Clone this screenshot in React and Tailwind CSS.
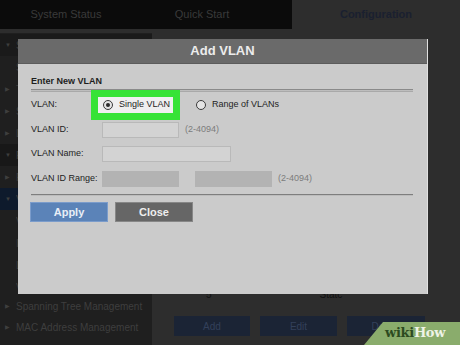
import React from "react";

const sideRows = [
  { arrow: "▼", text: "System", tone: "bg-[#1a1a1a]" },
  { arrow: "", text: "System Info", tone: "" },
  { arrow: "▶", text: "Time", tone: "" },
  { arrow: "▶", text: "SNMP", tone: "" },
  { arrow: "▶", text: "Logs", tone: "" },
  { arrow: "▼", text: "Port Management", tone: "bg-[#181818]" },
  { arrow: "▶", text: "Port Settings", tone: "" },
  { arrow: "▼", text: "VLAN Management", tone: "bg-[#0e1a2c]" },
  { arrow: "", text: "VLAN Settings", tone: "" },
  { arrow: "", text: "Interface Settings", tone: "" },
  { arrow: "", text: "LAG", tone: "" },
  { arrow: "", text: "Voice VLAN", tone: "" },
];

const Radio = ({ checked }) => (
  <span className="w-[10px] h-[10px] rounded-full border border-[#3a3a3a] bg-[#e4e4e4] flex items-center justify-center">
    {checked && <span className="w-[4px] h-[4px] rounded-full bg-[#2a2a2a]" />}
  </span>
);

const App = () => {
  return (
    <div className="relative w-[460px] h-[345px] overflow-hidden bg-[#2d2d2d] font-['Liberation_Sans',Arial,sans-serif]">
      {/* TOP NAV */}
      <div className="flex h-[29px]">
        <div className="flex w-[292px] bg-[#0b0b0b] text-[11px] text-[#3a3a3a]">
          <div className="w-[132px] flex items-center justify-center">System Status</div>
          <div className="w-[160px] flex items-center justify-center pr-[20px]">Quick Start</div>
        </div>
        <div className="flex-1 flex items-center justify-center text-[11px] font-bold text-[#1a2030]">
          Configuration
        </div>
      </div>

      <div className="flex">
        {/* SIDEBAR */}
        <div className="w-[152px] mt-[4px] h-[320px] bg-[#1f1f1f] flex flex-col pt-[1px] text-[10px] text-[#3e3e3e]">
          {sideRows.map((r, i) => (
            <div key={i} className={`h-[22px] flex items-center gap-[5px] pl-[5px] ${r.tone}`}>
              <span className="w-[6px] text-[6px]">{r.arrow}</span>
              <span className="w-[6px] overflow-hidden whitespace-nowrap">{r.text}</span>
            </div>
          ))}
          <div className="h-[21px] flex items-center gap-[5px] pl-[5px] -mt-[2px]">
            <span className="w-[6px] text-[6px]">▶</span>
            <span>Spanning Tree Management</span>
          </div>
          <div className="h-[21px] flex items-center gap-[5px] pl-[5px]">
            <span className="w-[6px] text-[6px]">▶</span>
            <span>MAC Address Management</span>
          </div>
        </div>

        {/* MAIN (behind modal) */}
        <div className="flex-1 flex flex-col pt-[260px] text-[10px]">
          <div className="flex h-[10px] items-center text-[#111]">
            <span className="ml-[54px]">5</span>
            <span className="ml-[108px]">Statc</span>
          </div>
          <div className="flex gap-[10px] mt-[17px] ml-[22px]">
            <div className="w-[76px] h-[20px] bg-[#1b2435] text-[#33405a] flex items-center justify-center">Add</div>
            <div className="w-[77px] h-[20px] bg-[#1b2435] text-[#33405a] flex items-center justify-center">Edit</div>
            <div className="w-[78px] h-[20px] bg-[#1b2435] text-[#33405a] flex items-center justify-center">Delete</div>
          </div>
        </div>
      </div>

      {/* MODAL */}
      <div className="absolute left-[18px] top-[39px] w-[410px] h-[255px] flex flex-col bg-[#cbcbcb] border-r border-[#e0e0e0]">
        <div className="h-[25px] bg-[#6a6a6a] flex items-center justify-center text-[13px] font-bold text-[#ececec] border-b border-[#5c5c5c]">
          Add VLAN
        </div>
        <div className="flex flex-col px-[13px] text-[9px] text-[#1e1e1e]">
          <div className="mt-[12px] font-bold text-[9px] leading-[11px]">Enter New VLAN</div>
          <div className="mt-[2px] mr-[1px] h-[3px] border-t border-b border-t-[#8a8a8a] border-b-[#a9a9a9] bg-[#bdbdbd]" />

          {/* VLAN radio row */}
          <div className="flex items-center h-[28px] -mt-[1px]">
            <span className="w-[60px]">VLAN:</span>
            <div className="w-[89px] h-[30px] bg-[#36e336] flex items-center justify-center">
              <div className="w-[75px] h-[16px] bg-[#efefef] flex items-center gap-[6px] pl-[5px]">
                <Radio checked />
                <span>Single VLAN</span>
              </div>
            </div>
            <div className="flex items-center gap-[6px] ml-[16px]">
              <Radio />
              <span>Range of VLANs</span>
            </div>
          </div>

          {/* VLAN ID */}
          <div className="flex items-center h-[24px] -mt-[1px]">
            <span className="w-[71px]">VLAN ID:</span>
            <div className="w-[77px] h-[16px] bg-[#d3d3d3] border border-[#b9b9b9]" />
            <span className="ml-[6px] text-[#7c7c7c]">(2-4094)</span>
          </div>

          {/* VLAN NAME */}
          <div className="flex items-center h-[24px]">
            <span className="w-[71px]">VLAN Name:</span>
            <div className="w-[129px] h-[16px] bg-[#d3d3d3] border border-[#b9b9b9]" />
          </div>

          {/* RANGE */}
          <div className="flex items-center h-[25px]">
            <span className="w-[71px]">VLAN ID Range:</span>
            <div className="w-[77px] h-[16px] bg-[#b3b3b3]" />
            <div className="w-[77px] h-[16px] bg-[#b3b3b3] ml-[16px]" />
            <span className="ml-[6px] text-[#7c7c7c]">(2-4094)</span>
          </div>

          <div className="mt-[3px] mr-[1px] h-[2px] border-t border-[#7e7e7e] bg-[#bcbcbc]" />

          <div className="flex gap-[7px] mt-[6px] -ml-[1px]">
            <div className="w-[78px] h-[20px] bg-[#5b83b8] border border-[#7b9ccb] flex items-center justify-center text-[11px] font-bold text-[#e8eef6]">
              Apply
            </div>
            <div className="w-[78px] h-[20px] bg-[#666666] border border-[#878787] flex items-center justify-center text-[11px] font-bold text-[#eeeeee]">
              Close
            </div>
          </div>
        </div>
      </div>

      {/* WIKIHOW BADGE */}
      <div className="absolute right-0 bottom-0 w-[96px] h-[23px]">
        <svg className="absolute inset-0" width="96" height="23" viewBox="0 0 96 23">
          <polygon points="19,0 96,0 96,23 0,23" fill="#8aac6c" />
        </svg>
        <div className="absolute left-[21px] top-[3px] flex items-baseline text-[13px] leading-[16px] font-bold font-['DejaVu_Serif',serif] tracking-[-0.3px]">
          <span className="text-[#2c4a20]">wiki</span>
          <span className="text-[#eef3e6]">How</span>
        </div>
      </div>
    </div>
  );
};

export default App;
